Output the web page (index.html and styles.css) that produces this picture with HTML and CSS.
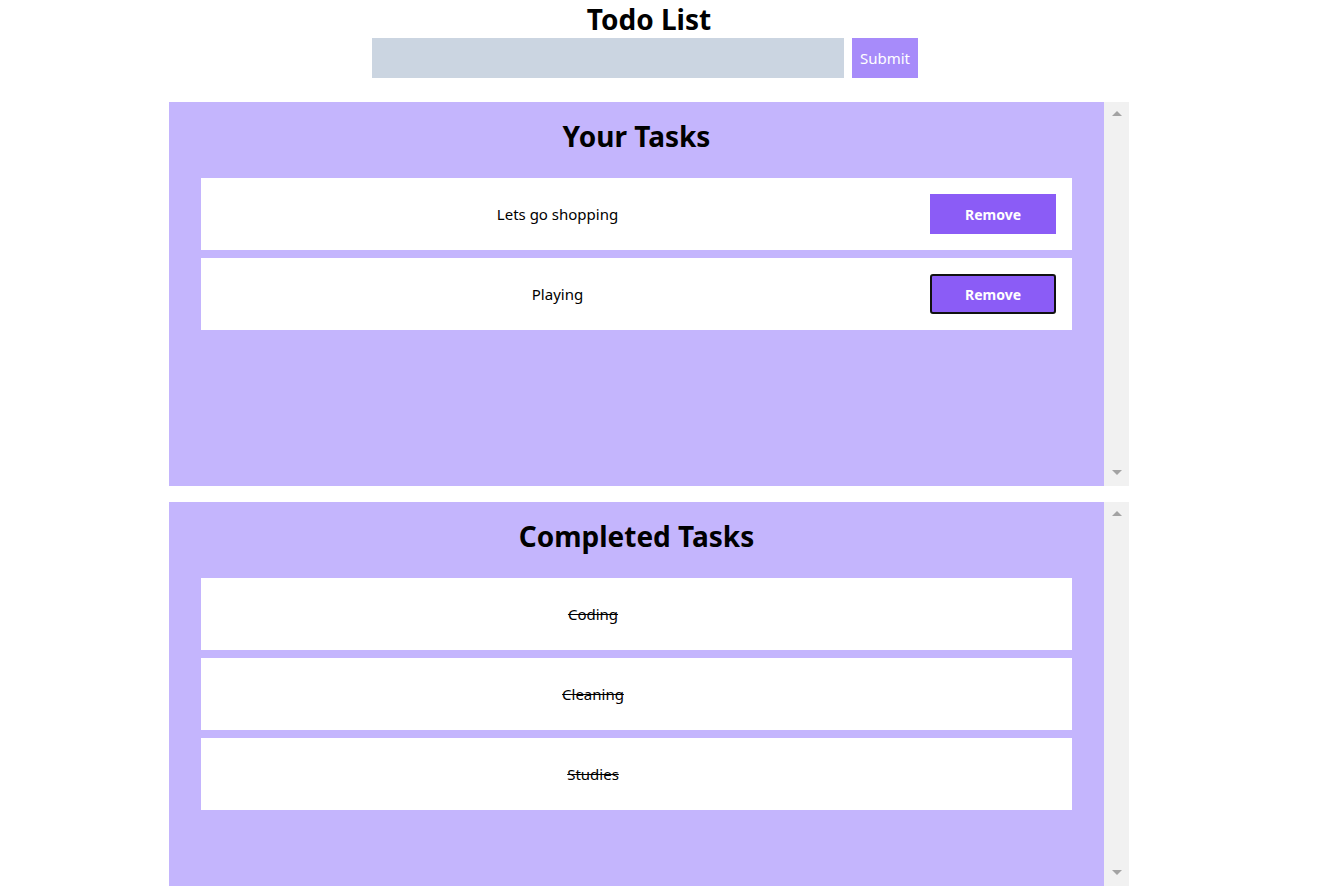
FILE: index.html
```html
<!DOCTYPE html>
<html lang="en">
<head>
<meta charset="utf-8">
<title>Todo List</title>
<link rel="stylesheet" href="styles.css">
</head>
<body>
<div class="app">
  <h1 class="title">Todo List</h1>
  <form class="add-form">
    <input class="add-input" type="text">
    <button class="submit-btn" type="button">Submit</button>
  </form>

  <section class="panel-wrap">
    <div class="panel">
      <h2 class="panel-title">Your Tasks</h2>
      <ul class="task-list">
        <li class="task">
          <span class="task-text">Lets go shopping</span>
          <button class="remove-btn" type="button">Remove</button>
        </li>
        <li class="task">
          <span class="task-text">Playing</span>
          <button class="remove-btn remove-btn--focus" type="button">Remove</button>
        </li>
      </ul>
    </div>
    <div class="scrollbar"><span class="arrow arrow--up"></span><span class="arrow arrow--down"></span></div>
  </section>

  <section class="panel-wrap">
    <div class="panel">
      <h2 class="panel-title">Completed Tasks</h2>
      <ul class="task-list">
        <li class="task task--done"><span class="task-text">Coding</span></li>
        <li class="task task--done"><span class="task-text">Cleaning</span></li>
        <li class="task task--done"><span class="task-text">Studies</span></li>
      </ul>
    </div>
    <div class="scrollbar"><span class="arrow arrow--up"></span><span class="arrow arrow--down"></span></div>
  </section>
</div>
</body>
</html>
```

FILE: styles.css
```css
* { box-sizing: border-box; }

body {
  margin: 0;
  font-family: "Noto Sans", "Open Sans", sans-serif;
  color: #000;
  background: #fff;
}

.app {
  width: 1298px;
  display: flex;
  flex-direction: column;
  align-items: center;
}

.title {
  margin: 0;
  font-size: 28px;
  line-height: 38px;
  font-weight: 700;
}

.add-form {
  margin: 0;
  padding-right: 8px;
  display: flex;
  gap: 8px;
}

.add-input {
  width: 472px;
  height: 40px;
  border: none;
  background: #cbd5e1;
  padding: 0 8px;
  font: inherit;
}

.submit-btn {
  width: 66px;
  height: 40px;
  border: none;
  background: #a78bfa;
  color: #fff;
  font-family: inherit;
  font-size: 15px;
  padding: 0;
}

.panel-wrap {
  width: 960px;
  height: 384px;
  margin-top: 24px;
  display: flex;
}

.panel-wrap + .panel-wrap { margin-top: 16px; }

.panel {
  flex: 1;
  background: #c4b5fd;
  padding: 16px 32px;
}

.panel-title {
  margin: 0 0 24px;
  text-align: center;
  font-size: 28px;
  line-height: 36px;
  font-weight: 700;
}

.task-list {
  list-style: none;
  margin: 0;
  padding: 0;
  display: flex;
  flex-direction: column;
  gap: 8px;
}

.task {
  height: 72px;
  background: #fff;
  display: flex;
  align-items: center;
  gap: 16px;
  padding-right: 16px;
  font-size: 15px;
}

.task-text {
  flex: 1;
  text-align: center;
}

.task--done { padding-right: 87px; }
.task--done .task-text { text-decoration: line-through; }

.remove-btn {
  width: 126px;
  height: 40px;
  border: none;
  background: #8b5cf6;
  color: #fff;
  font-family: inherit;
  font-weight: 700;
  font-size: 14px;
  padding: 0;
}

.remove-btn--focus {
  border: 2px solid #111;
  border-radius: 3px;
}

.scrollbar {
  width: 25px;
  background: #f1f1f1;
  display: flex;
  flex-direction: column;
  justify-content: space-between;
  align-items: center;
  padding: 9px 0 11px;
}

.arrow {
  width: 0;
  height: 0;
  border-left: 5px solid transparent;
  border-right: 5px solid transparent;
}

.arrow--up { border-bottom: 5px solid #a3a3a3; }
.arrow--down { border-top: 5px solid #a3a3a3; }
```
